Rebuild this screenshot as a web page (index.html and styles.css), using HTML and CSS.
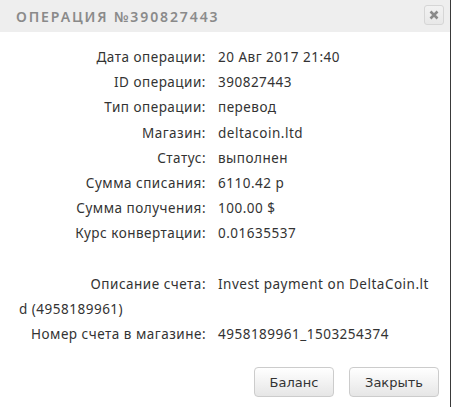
FILE: index.html
```html
<!DOCTYPE html>
<html lang="ru">
<head>
<meta charset="utf-8">
<link rel="stylesheet" href="styles.css">
</head>
<body>
<div class="dialog">
  <div class="header">
    <div class="title">ОПЕРАЦИЯ №390827443</div>
    <button class="close" type="button" aria-label="Закрыть">
      <svg width="10" height="10" viewBox="0 0 10 10"><path d="M1.5 1.5 L8.5 8.5 M8.5 1.5 L1.5 8.5" stroke="#8a8a8a" stroke-width="2.6" stroke-linecap="butt"/></svg>
    </button>
  </div>
  <div class="content">
    <div class="row"><span class="label">Дата операции:</span><span class="value">20 Авг 2017 21:40</span></div>
    <div class="row"><span class="label">ID операции:</span><span class="value">390827443</span></div>
    <div class="row"><span class="label">Тип операции:</span><span class="value">перевод</span></div>
    <div class="row"><span class="label">Магазин:</span><span class="value">deltacoin.ltd</span></div>
    <div class="row"><span class="label">Статус:</span><span class="value">выполнен</span></div>
    <div class="row"><span class="label">Сумма списания:</span><span class="value">6110.42 р</span></div>
    <div class="row"><span class="label">Сумма получения:</span><span class="value">100.00 $</span></div>
    <div class="row"><span class="label">Курс конвертации:</span><span class="value">0.01635537</span></div>
    <div class="row blank">&nbsp;</div>
    <div class="row wrap"><span class="label">Описание счета:</span><span class="value">Invest payment on DeltaCoin.ltd (4958189961)</span></div>
    <div class="row"><span class="label">Номер счета в магазине:</span><span class="value">4958189961_1503254374</span></div>
  </div>
  <div class="footer">
    <button class="btn" type="button">Баланс</button>
    <button class="btn" type="button">Закрыть</button>
  </div>
</div>
</body>
</html>
```
FILE: styles.css
```css
html, body {
  margin: 0;
  padding: 0;
  background: #ffffff;
}
.dialog {
  width: 450px;
  height: 407px;
  border-right: 1px solid #3a3a3a;
  background: #ffffff;
  display: flex;
  flex-direction: column;
}
.header {
  height: 32px;
  background: #eeeeee;
  display: flex;
  align-items: center;
  justify-content: space-between;
  padding: 0 6px 0 16px;
}
.title {
  font-family: "Noto Sans", sans-serif;
  font-weight: 600;
  font-size: 14px;
  letter-spacing: 1.9px;
  color: #8a8a8a;
  margin-top: 1px;
}
.close {
  width: 20px;
  height: 20px;
  padding: 0;
  border: 1px solid #d6d6d6;
  border-radius: 3px;
  background: linear-gradient(#f2f2f2, #e8e8e8);
  display: flex;
  align-items: center;
  justify-content: center;
  margin-top: -3px;
}
.content {
  padding: 13px 16px 0 19px;
  font-family: "Noto Sans", sans-serif;
  font-size: 13.5px;
  letter-spacing: 0.5px;
  color: #333333;
  line-height: 25.2px;
}
.row {
  height: 25.2px;
}
.row.wrap {
  height: auto;
}
.label {
  display: inline-block;
  width: 187px;
  text-align: right;
  vertical-align: top;
}
.value {
  margin-left: 12px;
}
.wrap .value {
  word-break: break-all;
}
.footer {
  margin-top: auto;
  display: flex;
  justify-content: flex-end;
  gap: 15px;
  padding: 0 11px 10px 0;
}
.btn {
  height: 30px;
  padding: 0 10px;
  font-family: "DejaVu Sans", sans-serif;
  font-size: 13px;
  color: #333333;
  border: 1px solid #cccccc;
  border-radius: 4px;
  background: linear-gradient(#ffffff, #e6e6e6);
}
.btn:first-child {
  width: 80px;
}
.btn:last-child {
  width: 90px;
}
```
